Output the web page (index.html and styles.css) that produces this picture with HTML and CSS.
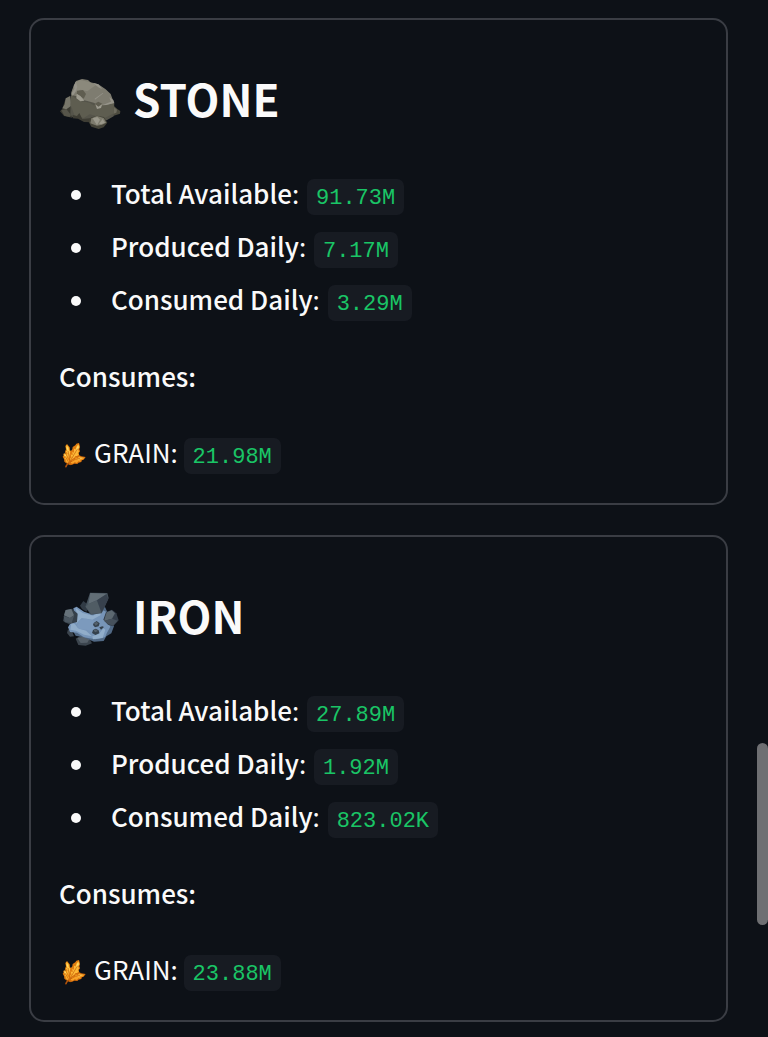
FILE: index.html
```html
<!DOCTYPE html>
<html lang="en">
<head>
    <meta charset="UTF-8">
    <meta name="viewport" content="width=device-width, initial-scale=1.0">
    <title>Resources</title>
    <link rel="stylesheet" href="styles.css">
</head>
<body>
    <!-- Shared grain icon -->
    <svg class="sprite" aria-hidden="true">
        <symbol id="grain" viewBox="30 30 84 84">
            <path fill="#d8770f" d="M52 99l-9-7-1-8-4-7 3-4-2-5 7 2 9 9 4 8 4 16z"/>
            <path fill="#fbb232" d="M52 95l-6-6 3-1-7-7 4-1-5-8 4 0-3-7 7 4 6 9-1 3 4 5-1 4 4 7z"/>
            <path fill="#e8860f" d="M57 90l-7-12-5-15 3-8-2-10 5-6 8 10 1 8 5 6-1 12 1 14z"/>
            <path fill="#ffc443" d="M58 84l-8-14 4 0-7-11 5 1-4-10 2-8 7 9-1 5 6 7-2 4 3 13z"/>
            <path fill="#e07c10" d="M58 97l0-22 3-13 6-7 1-7 8-5 3-5 8-2 3 11-2 8 2 6-4 6 2 6-7 8-5 8-10 10z"/>
            <path fill="#fdb837" d="M61 93l0-13 4 3-3-13 6 3-1-11 5 3 0-12 5 2 2-8 7-7 2 10-5 8 5 1-5 8 4 2-8 8 4 1-8 9z"/>
            <path fill="#d06a0b" d="M56 99l9-13 8-6 4-5 7 1 4-3 6 3 13 2-6 8-5 2-2 5-8 2-4 4-9-1-8 4z"/>
            <path fill="#f9a226" d="M61 96l7-9 7-2 2-6 5 2 6-5 3 3 13 1-7 6-5 0-1 6-6-1-4 5-7-2-6 4z"/>
            <path fill="#ffe06e" d="M84 42l2 7-7 14 0-9zM51 46l4 9 0 6-4-7zM41 68l6 4 4 9-5-4zM88 80l11 0-9 4-8 2z"/>
            <path fill="none" stroke="#c25d09" stroke-width="2" d="M48 108q3-8 12-16l12-21 11-18M57 96L46 76M60 92L54 60M60 94l16-9 15-3"/>
            <path fill="none" stroke="#b4530a" stroke-width="4" d="M47 109q2-8 9-13"/>
        </symbol>
    </svg>

    <main class="container">
        <section class="card">
            <h2>
                <svg class="icon" viewBox="27 21 192 192" aria-hidden="true">
                    <path fill="#3c3c33" d="M45 106l14-14 12 38-5 28-24-5-12-14 7-8z"/>
                    <path fill="#77766a" d="M47 100l14-7 3 29-15 11-12-3 7-12z"/>
                    <path fill="#56554a" d="M34 136l15-4 14 18-4 6-16-4z"/>
                    <path fill="#4b4a3e" d="M191 122l11 10 9 6-1 8-21 7z"/>
                    <path fill="#6d6b5e" d="M192 126l9 8-2 9-10 4z"/>
                    <path fill="#55544a" d="M63 90l9-30 60 50 61 4-2 40-21 12-40-2-24 4-17-9-22-3-6-9z"/>
                    <path fill="#5e5d50" d="M63 90l15 11 16 8 25 4 20 13 52-14 1 33-30 15-43-12-18 11-27-7-12-31z"/>
                    <path fill="#7e7c70" d="M64 82l8-22 6-12 18-6 18 3 7 7 24 6 22 15 15 14 10 27-16 4-28 4-17-9-19-5-16-4-16-10-16-4z"/>
                    <path fill="#8b897c" d="M76 52l15-7 27 6 20 9-26 19-21-5-11 9-6-18z"/>
                    <path fill="#96948a" d="M72 61l6-10 4 14-5 15-9 13-3-8 8-14zM128 53l17 5 12 14-10-4zM158 84l-24 17 1 3 25-19zM178 97l12 8 3 9-24 6-13 1 19-8 8-3z"/>
                    <path fill="#5f5d50" d="M81 77l18-2 9 12-7 14-11-8-10-5zM138 114l7-4 12 6-5 12-13 1-8-7z"/>
                    <path fill="#9e9c90" d="M80 86l11 7 12 14-12 2-12-9zM136 118l9 7 12-8-4 12-12 3z"/>
                    <path fill="#3e3d34" d="M68 150l13 3 7-9 9 18 22-2 12-5 7 9-15 8-21-1-18-10-16-1z"/>
                    <path fill="#444338" d="M120 160l20-8 22 4 10 17-11 14-15 5-22-7-8-14z"/>
                    <path fill="#7d7b6d" d="M124 160l17-7 20 6 8 14-13 6-15 3-20-7z"/>
                    <path fill="#9a988b" d="M128 160l14-4 8 8-9 17-8-13zM158 162l7 11-11 5-7-2z"/>
                </svg>
                STONE
            </h2>
            <ul>
                <li><strong>Total Available</strong>: <code>91.73M</code></li>
                <li><strong>Produced Daily</strong>: <code>7.17M</code></li>
                <li><strong>Consumed Daily</strong>: <code>3.29M</code></li>
            </ul>
            <p><strong>Consumes:</strong></p>
            <p><svg class="icon-small" aria-hidden="true"><use href="#grain"/></svg>GRAIN: <code>21.98M</code></p>
        </section>

        <section class="card">
            <h2>
                <svg class="icon" viewBox="27 27 192 192" aria-hidden="true">
                    <path fill="#3b444d" d="M54 148l12 6 6 15-12 1-9-11zM77 176l14-8 29 11 6 11-19 7-22-2z"/>
                    <path fill="#566069" d="M82 174l18-4 18 8-6 10-20 1z"/>
                    <path fill="#516985" d="M61 126l104-45 27 58-8 21-15 9-8 14-29 2-31-13-24-5-13-22z"/>
                    <path fill="#7795b8" d="M70 85l10-5 22 15 27 9 27-14 14 6-5 21 16 23-10 18-6 14-29 6-34-6-21-14-21-2-6-14 20-33z"/>
                    <path fill="#91adc9" d="M76 83l22 16 31 8 25-14-3 13-24 13-32-5-17 18 4-27zM64 128l11 5 9 12 24 7 18 17-24-5-24-12-17-3zM127 169l20-7 13-17 6 4-8 25-29 4z"/>
                    <path fill="#7c9abd" d="M89 120l19-4 23 5 9 13-6 24-21-8-25-3-7-10z"/>
                    <path fill="#313b45" d="M90 77l10-14 20 16-11 16-13-8z"/>
                    <path fill="#44515b" d="M120 38l52 1 4 15-21 46-33 4-16-24z"/>
                    <path fill="#626e76" d="M121 39l49 2-28 19-27 12z"/>
                    <path fill="#505c64" d="M114 73l27-12 13 37-30 4-17-22z"/>
                    <path fill="#37414d" d="M169 43l6 14-20 41-14-37z"/>
                    <path fill="#35404a" d="M46 91l20-5 17 15-2 25-24 7-18-10z"/>
                    <path fill="#66727a" d="M47 90l17-3 8 19-12 8-18-8z"/>
                    <path fill="#4a5660" d="M41 108l19 6 13-9-8 24-21-2z"/>
                    <path fill="#333d49" d="M168 96l18-7 13 11 7 21-17 18-15-5-14-15z"/>
                    <path fill="#5c6870" d="M170 97l15-6 10 9-9 16-24 7z"/>
                    <path fill="#46515c" d="M162 122l24-6 17 6-14 15-15-5z"/>
                    <path fill="#34404c" d="M131 129l9-6 9 7-3 9-11 3-6-7zM129 150l8-4 9 5 2 9-12 5-10-6zM148 142l9-3 5 2-9 8z"/>
                    <path fill="#53606c" d="M132 130l8-5 5 6-8 6zM131 151l6-3 7 5-9 4z"/>
                </svg>
                IRON
            </h2>
            <ul>
                <li><strong>Total Available</strong>: <code>27.89M</code></li>
                <li><strong>Produced Daily</strong>: <code>1.92M</code></li>
                <li><strong>Consumed Daily</strong>: <code>823.02K</code></li>
            </ul>
            <p><strong>Consumes:</strong></p>
            <p><svg class="icon-small" aria-hidden="true"><use href="#grain"/></svg>GRAIN: <code>23.88M</code></p>
        </section>
    </main>

    <div class="scroll-thumb"></div>
</body>
</html>
```

FILE: styles.css
```css
* {
    box-sizing: border-box;
}

body {
    margin: 0;
    background-color: #0d1117;
    color: #fafafa;
    font-family: "Noto Sans CJK SC", "Noto Sans", sans-serif;
    font-size: 26px;
    line-height: 46px;
}

.sprite {
    position: absolute;
    width: 0;
    height: 0;
}

.container {
    display: flex;
    flex-direction: column;
    gap: 30px;
    padding: 18px 40px 14px 29px;
}

/* Resource cards */
.card {
    padding: 28px;
    border: 2px solid #3a3d44;
    border-radius: 15px;
}

.card h2 {
    display: flex;
    align-items: baseline;
    gap: 10px;
    margin: 0 0 14px;
    padding: 18px 0 20px;
    font-size: 44px;
    font-weight: 700;
    line-height: 64px;
}

.card ul {
    display: flex;
    flex-direction: column;
    gap: 7px;
    margin: 0 0 31px;
    padding: 0;
    list-style: none;
}

.card li {
    display: flex;
    align-items: baseline;
    white-space: pre;
}

.card li::before {
    content: "";
    align-self: center;
    width: 10px;
    height: 10px;
    margin: 4px 30px 0 12px;
    border-radius: 50%;
    background-color: #fafafa;
}

.card li code {
    margin-left: 2px;
}

.card p {
    display: flex;
    align-items: baseline;
    margin: 0 0 30px;
    white-space: pre;
}

.card p:last-child {
    margin-bottom: 0;
}

strong {
    font-weight: 500;
}

code {
    padding: 4px 9px 0;
    border-radius: 7px;
    background-color: #171b22;
    color: #1ac566;
    font-family: "Liberation Mono", monospace;
    font-size: 22px;
    line-height: 32px;
}

/* Icons */
.icon {
    align-self: flex-start;
    width: 64px;
    height: 64px;
    margin-top: 6px;
}

.icon-small {
    align-self: flex-start;
    width: 28px;
    height: 28px;
    margin: 12px 6px 0 1px;
}

/* Scroll indicator on the right edge */
.scroll-thumb {
    position: fixed;
    top: 743px;
    right: 0;
    width: 11px;
    height: 182px;
    border-radius: 6px;
    background-color: #6e6f72;
}
```
